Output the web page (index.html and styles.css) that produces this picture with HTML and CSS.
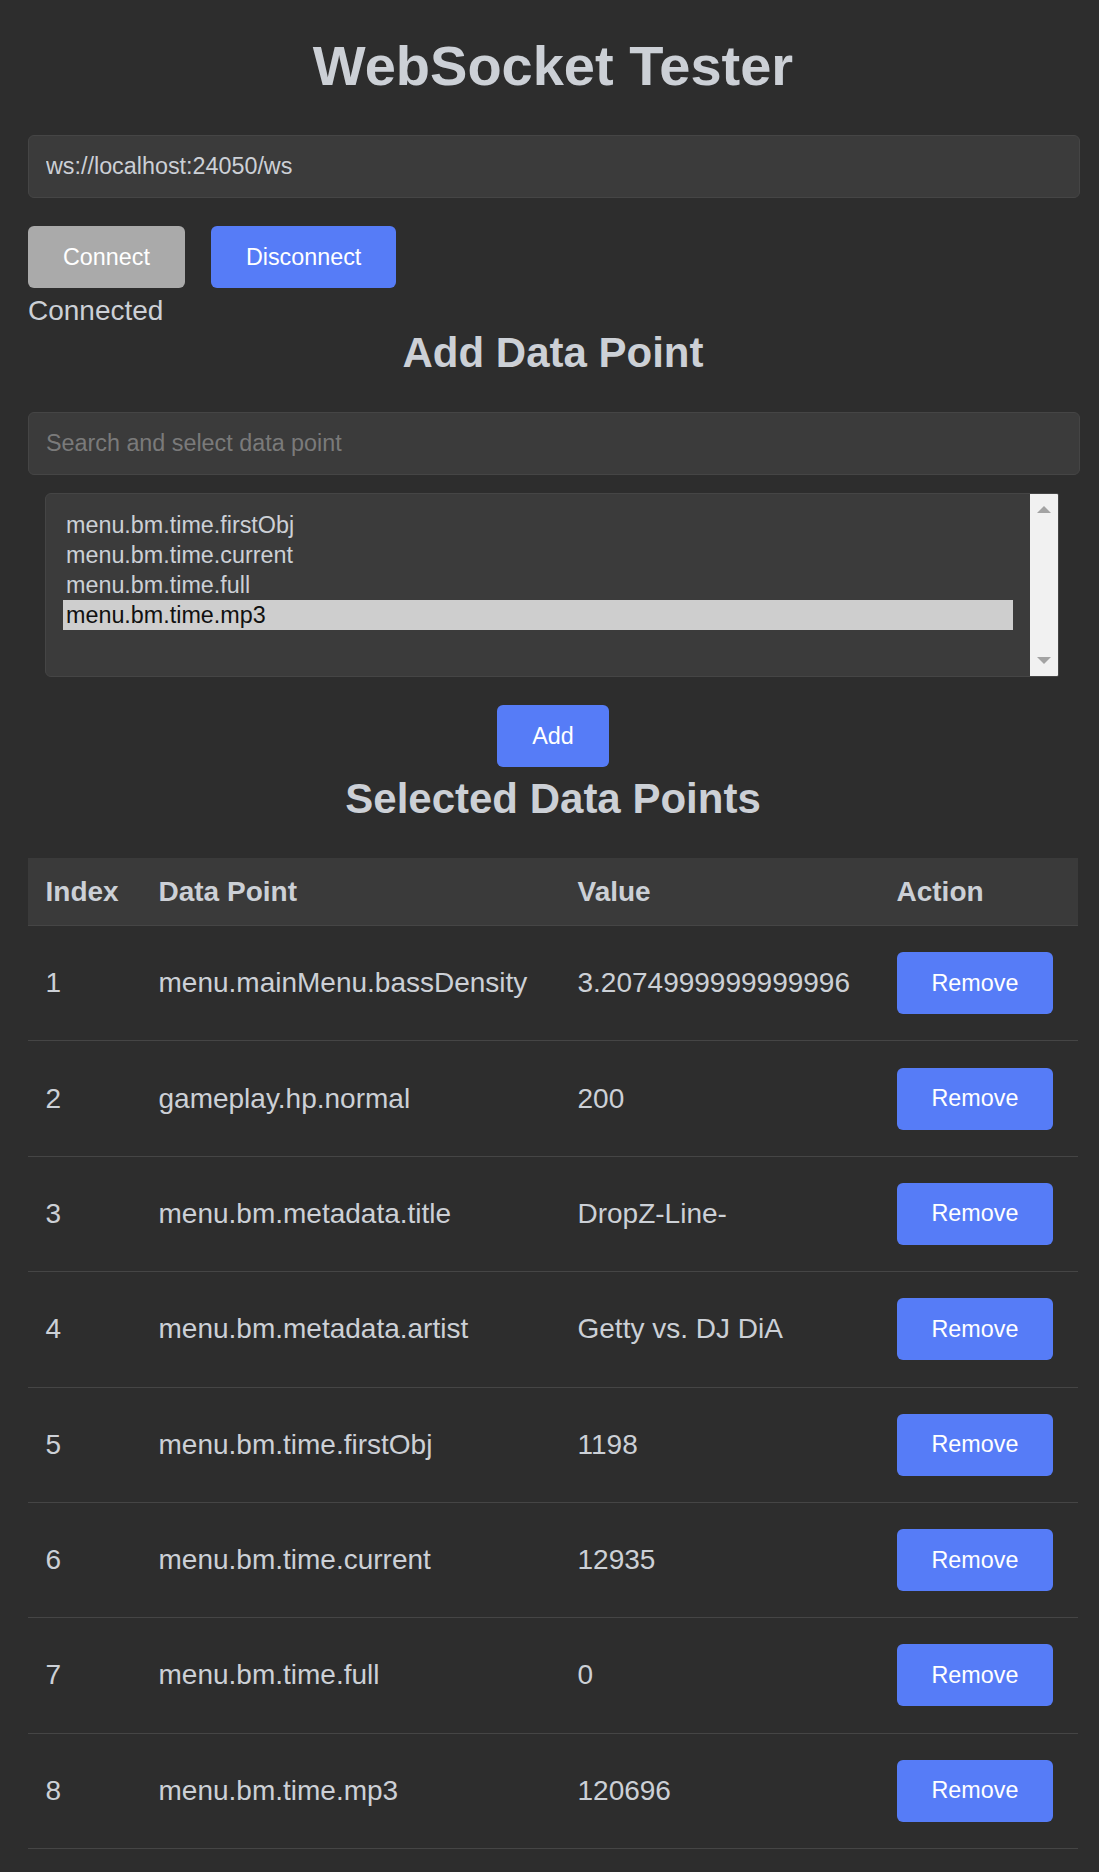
FILE: index.html
```html
<!DOCTYPE html>
<html lang="en">
<head>
<meta charset="utf-8">
<title>WebSocket Tester</title>
<link rel="stylesheet" href="styles.css">
</head>
<body>
<div class="page">
  <h1 class="title">WebSocket Tester</h1>
  <input class="field" type="text" value="ws://localhost:24050/ws">
  <div class="controls">
    <button class="btn btn-gray">Connect</button>
    <button class="btn btn-blue">Disconnect</button>
  </div>
  <div class="status">Connected</div>

  <h2 class="heading heading-add">Add Data Point</h2>
  <input class="field" type="text" placeholder="Search and select data point">
  <div class="listbox">
    <div class="options">
      <div class="option">menu.bm.time.firstObj</div>
      <div class="option">menu.bm.time.current</div>
      <div class="option">menu.bm.time.full</div>
      <div class="option selected">menu.bm.time.mp3</div>
    </div>
    <div class="scrollbar">
      <span class="arrow arrow-up"></span>
      <span class="arrow arrow-down"></span>
    </div>
  </div>
  <div class="add-row">
    <button class="btn btn-blue">Add</button>
  </div>

  <h2 class="heading heading-selected">Selected Data Points</h2>
  <table class="points">
    <colgroup>
      <col class="c-index">
      <col class="c-point">
      <col class="c-value">
      <col class="c-action">
    </colgroup>
    <thead>
      <tr><th>Index</th><th>Data Point</th><th>Value</th><th>Action</th></tr>
    </thead>
    <tbody>
      <tr><td>1</td><td>menu.mainMenu.bassDensity</td><td>3.2074999999999996</td><td><button class="btn btn-blue">Remove</button></td></tr>
      <tr><td>2</td><td>gameplay.hp.normal</td><td>200</td><td><button class="btn btn-blue">Remove</button></td></tr>
      <tr><td>3</td><td>menu.bm.metadata.title</td><td>DropZ-Line-</td><td><button class="btn btn-blue">Remove</button></td></tr>
      <tr><td>4</td><td>menu.bm.metadata.artist</td><td>Getty vs. DJ DiA</td><td><button class="btn btn-blue">Remove</button></td></tr>
      <tr><td>5</td><td>menu.bm.time.firstObj</td><td>1198</td><td><button class="btn btn-blue">Remove</button></td></tr>
      <tr><td>6</td><td>menu.bm.time.current</td><td>12935</td><td><button class="btn btn-blue">Remove</button></td></tr>
      <tr><td>7</td><td>menu.bm.time.full</td><td>0</td><td><button class="btn btn-blue">Remove</button></td></tr>
      <tr><td>8</td><td>menu.bm.time.mp3</td><td>120696</td><td><button class="btn btn-blue">Remove</button></td></tr>
    </tbody>
  </table>
</div>
</body>
</html>
```
FILE: styles.css
```css
* { box-sizing: border-box; }

html, body {
  margin: 0;
  padding: 0;
  background: #2d2d2d;
}

body {
  font-family: "Liberation Sans", Arial, sans-serif;
  color: #ccd0d6;
  font-size: 28px;
}

.page {
  padding: 34px 21px 0 28px;
}

.title {
  margin: 0 0 37px;
  font-size: 56px;
  line-height: 64px;
  font-weight: bold;
  text-align: center;
  color: #ccd0d6;
}

.field {
  display: block;
  width: calc(100% + 2px);
  height: 63px;
  margin: 0;
  padding: 0 17px;
  font-family: "Liberation Sans", Arial, sans-serif;
  font-size: 23.33px;
  color: #ccd0d6;
  background: #3b3b3b;
  border: 1px solid #454545;
  border-radius: 6px;
  outline: none;
}

.field::placeholder {
  color: #7a7a7a;
}

.controls {
  display: flex;
  gap: 26px;
  margin-top: 28px;
}

.btn {
  height: 62px;
  padding: 0 35px;
  font-family: "Liberation Sans", Arial, sans-serif;
  font-size: 23.33px;
  color: #ffffff;
  border: none;
  border-radius: 6px;
  cursor: pointer;
}

.btn-gray { background: #aaaaaa; }
.btn-blue { background: #567cf7; }

.status {
  margin-top: 7px;
  line-height: 32px;
}

.heading {
  margin: 0;
  font-size: 42px;
  line-height: 48px;
  font-weight: bold;
  text-align: center;
  color: #ccd0d6;
}

.heading-add {
  margin: 2px 0 35px;
}

.listbox {
  display: flex;
  height: 184px;
  margin: 18px 19px 0 17px;
  background: #3b3b3b;
  border: 1px solid #454545;
  border-radius: 6px 2px 2px 6px;
  overflow: hidden;
}

.options {
  flex: 1;
  padding: 16px 17px 16px 17px;
}

.option {
  height: 30px;
  line-height: 30px;
  padding-left: 3px;
  font-size: 23.33px;
  color: #ccd0d6;
  white-space: nowrap;
}

.option.selected {
  background: #cecece;
  color: #111111;
}

.scrollbar {
  position: relative;
  width: 28px;
  background: #f1f1f1;
}

.arrow {
  position: absolute;
  left: 7px;
  width: 0;
  height: 0;
  border-left: 7px solid transparent;
  border-right: 7px solid transparent;
}

.arrow-up {
  top: 12px;
  border-bottom: 7px solid #a3a3a3;
}

.arrow-down {
  bottom: 12px;
  border-top: 7px solid #a3a3a3;
}

.add-row {
  display: flex;
  justify-content: center;
  margin-top: 28px;
}

.heading-selected {
  margin: 8px 0 35px;
}

.points {
  width: 100%;
  border-collapse: collapse;
  table-layout: fixed;
}

.c-index { width: 113px; }
.c-point { width: 419px; }
.c-value { width: 319px; }
.c-action { width: 199px; }

.points th {
  padding: 17.5px 17.5px;
  line-height: 32px;
  text-align: left;
  font-weight: bold;
  background: #3a3a3a;
  border-bottom: 1px solid #454545;
}

.points td {
  padding: 17.2px 17.5px;
  line-height: 32px;
  vertical-align: middle;
  border-bottom: 1px solid #454545;
  white-space: nowrap;
}

.points td .btn {
  display: block;
  margin: 9px 0;
}
```
